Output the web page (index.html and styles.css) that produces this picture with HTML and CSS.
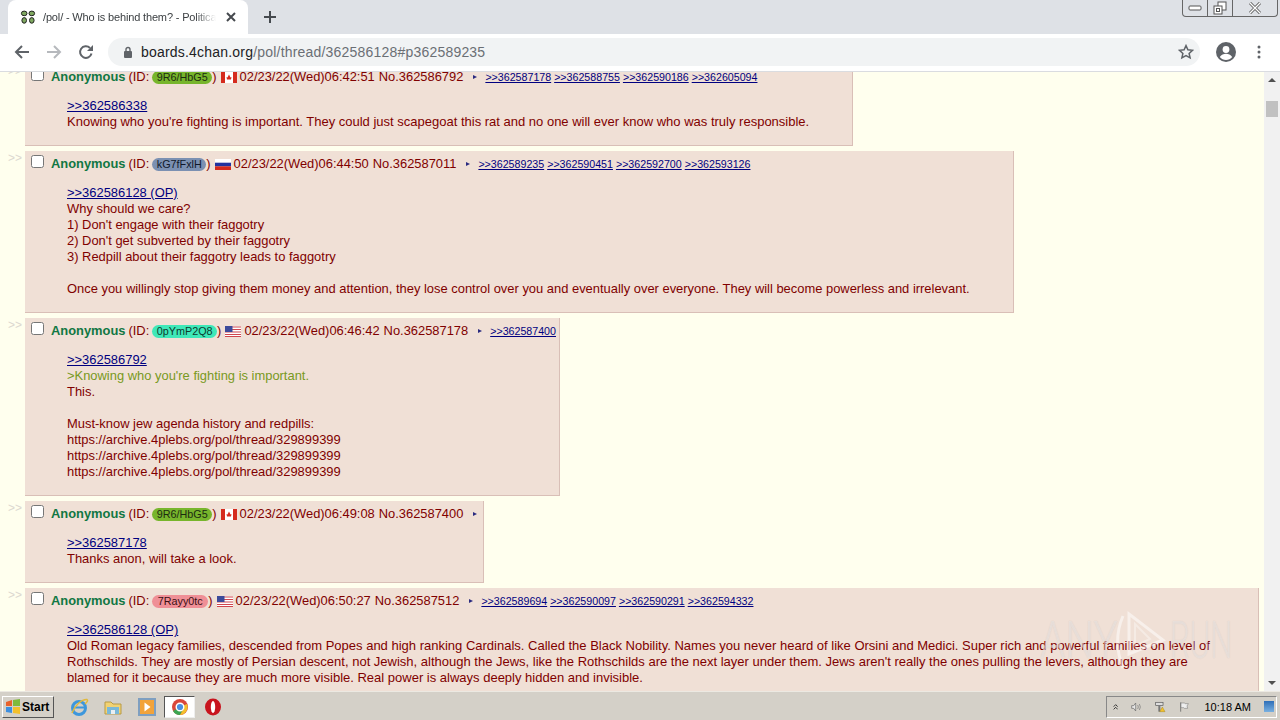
FILE: index.html
```html
<!DOCTYPE html>
<html lang="en">
<head>
<meta charset="utf-8">
<title>/pol/ - Who is behind them?</title>
<link rel="stylesheet" href="styles.css">
</head>
<body>
<div class="browser">
  <div class="tabstrip">
    <div class="tab">
      <svg class="favicon" width="16" height="16" viewBox="0 0 16 16"><g fill="#7fa860" stroke="#222" stroke-width="1"><ellipse cx="4.2" cy="4.4" rx="2.8" ry="2.3"/><ellipse cx="11.8" cy="4.4" rx="2.8" ry="2.3"/><ellipse cx="4.2" cy="11.4" rx="2.3" ry="2.8"/><ellipse cx="11.8" cy="11.4" rx="2.3" ry="2.8"/></g></svg>
      <span class="tab-title">/pol/ - Who is behind them? - Political</span>
      <svg class="tab-close" width="10" height="10" viewBox="0 0 10 10"><path d="M1 1l8 8M9 1l-8 8" stroke="#45494e" stroke-width="2"/></svg>
    </div>
    <svg class="newtab" width="14" height="14" viewBox="0 0 14 14"><path d="M7 1v12M1 7h12" stroke="#45494e" stroke-width="2"/></svg>
    <div class="winbtns">
      <div class="winbtn"><svg width="14" height="8" viewBox="0 0 14 8"><rect x="1" y="2" width="12" height="4" rx="1" fill="#fff" stroke="#555"/></svg></div>
      <div class="winbtn"><svg width="14" height="14" viewBox="0 0 14 14"><rect x="5" y="1" width="8" height="8" fill="#fff" stroke="#555"/><rect x="1" y="5" width="8" height="8" fill="#fff" stroke="#555"/><rect x="3.5" y="7.5" width="3" height="3" fill="none" stroke="#555"/></svg></div>
      <div class="winbtn wide"><svg width="12" height="12" viewBox="0 0 12 12"><path d="M1 1l10 10M11 1L1 11" stroke="#555" stroke-width="3"/><path d="M1 1l10 10M11 1L1 11" stroke="#fff" stroke-width="1.4"/></svg></div>
    </div>
  </div>
  <div class="toolbar">
    <svg class="navicon" width="16" height="16" viewBox="0 0 16 16"><path d="M15 8H2M8 2L2 8l6 6" fill="none" stroke="#5f6368" stroke-width="2"/></svg>
    <svg class="navicon" width="16" height="16" viewBox="0 0 16 16"><path d="M1 8h13M8 2l6 6-6 6" fill="none" stroke="#b6b9bd" stroke-width="2"/></svg>
    <svg class="navicon" width="16" height="16" viewBox="0 0 16 16"><path d="M13.5 9.5A5.8 5.8 0 1 1 12 4" fill="none" stroke="#5f6368" stroke-width="2"/><path d="M15 1v6H9z" fill="#5f6368"/></svg>
    <div class="omnibox">
      <svg width="10" height="12" viewBox="0 0 10 12"><rect x="1" y="5" width="8" height="7" rx="1" fill="#5f6368"/><path d="M3 5V3.5a2 2 0 0 1 4 0V5" fill="none" stroke="#5f6368" stroke-width="1.4"/></svg>
      <span class="url"><span class="host">boards.4chan.org</span>/pol/thread/362586128#p362589235</span>
      <svg class="star" width="16" height="16" viewBox="0 0 16 16"><path d="M8 1.6l1.9 4.2 4.6.5-3.4 3.1 1 4.5-4.1-2.3-4.1 2.3 1-4.5L1.5 6.3l4.6-.5z" fill="none" stroke="#5f6368" stroke-width="1.5"/></svg>
    </div>
    <svg class="avatar" width="20" height="20" viewBox="0 0 20 20"><circle cx="10" cy="10" r="10" fill="#5f6368"/><circle cx="10" cy="7.5" r="3.4" fill="#fff"/><path d="M3.8 15c1.6-2.4 3.8-3.2 6.2-3.2s4.600.8 6.200 3.200c-1.500 1.800-3.700 3-6.200 3s-4.700-1.200-6.200-3z" fill="#fff"/></svg>
    <svg class="menu" width="4" height="14" viewBox="0 0 4 14"><g fill="#5f6368"><circle cx="2" cy="2" r="1.500"/><circle cx="2" cy="7" r="1.500"/><circle cx="2" cy="12" r="1.500"/></g></svg>
  </div>
  <div class="viewport">
    <main class="thread">
      <div class="row">
        <div class="side">&gt;&gt;</div>
        <article class="post">
          <div class="head">
            <input type="checkbox" class="check">
            <span class="name">Anonymous</span>
            <span class="idlabel">(ID:</span><span class="pill pill-green">9R6/HbG5</span><span class="idclose">)</span>
            <svg class="flag" width="16" height="11" viewBox="0 0 16 11"><rect width="16" height="11" fill="#fff"/><rect width="4" height="11" fill="#d52b1e"/><rect x="12" width="4" height="11" fill="#d52b1e"/><path d="M8 2.500l1.500 3 1-.5-.5 2.500H6l-.5-2.500 1 .5z" fill="#d52b1e"/></svg>
            <span>02/23/22(Wed)06:42:51</span><span>No.362586792</span>
            <span class="tri"></span>
            <span class="backlinks"><a href="#">&gt;&gt;362587178</a> <a href="#">&gt;&gt;362588755</a> <a href="#">&gt;&gt;362590186</a> <a href="#">&gt;&gt;362605094</a></span>
          </div>
          <blockquote class="body body-wide"><a href="#">&gt;&gt;362586338</a><br>Knowing who you're fighting is important. They could just scapegoat this rat and no one will ever know who was truly responsible.</blockquote>
        </article>
      </div>
      <div class="row">
        <div class="side">&gt;&gt;</div>
        <article class="post">
          <div class="head">
            <input type="checkbox" class="check">
            <span class="name">Anonymous</span>
            <span class="idlabel">(ID:</span><span class="pill pill-blue">kG7fFxlH</span><span class="idclose">)</span>
            <svg class="flag" width="16" height="11" viewBox="0 0 16 11"><rect width="16" height="11" fill="#fff"/><rect y="3.700" width="16" height="3.700" fill="#2233a0"/><rect y="7.300" width="16" height="3.700" fill="#d52b1e"/></svg>
            <span>02/23/22(Wed)06:44:50</span><span>No.362587011</span>
            <span class="tri"></span>
            <span class="backlinks"><a href="#">&gt;&gt;362589235</a> <a href="#">&gt;&gt;362590451</a> <a href="#">&gt;&gt;362592700</a> <a href="#">&gt;&gt;362593126</a></span>
          </div>
          <blockquote class="body"><a href="#">&gt;&gt;362586128 (OP)</a><br>Why should we care?<br>1) Don't engage with their faggotry<br>2) Don't get subverted by their faggotry<br>3) Redpill about their faggotry leads to faggotry<br><br>Once you willingly stop giving them money and attention, they lose control over you and eventually over everyone. They will become powerless and irrelevant.</blockquote>
        </article>
      </div>
      <div class="row">
        <div class="side">&gt;&gt;</div>
        <article class="post">
          <div class="head">
            <input type="checkbox" class="check">
            <span class="name">Anonymous</span>
            <span class="idlabel">(ID:</span><span class="pill pill-teal">0pYmP2Q8</span><span class="idclose">)</span>
            <svg class="flag" width="16" height="11" viewBox="0 0 16 11"><rect width="16" height="11" fill="#fff"/><path d="M0 1h16M0 3.500h16M0 6h16M0 8.500h16M0 10.500h16" stroke="#d0464e" stroke-width="1.200"/><rect width="7.500" height="6" fill="#3c4a9a"/></svg>
            <span>02/23/22(Wed)06:46:42</span><span>No.362587178</span>
            <span class="tri"></span>
            <span class="backlinks"><a href="#">&gt;&gt;362587400</a></span>
          </div>
          <blockquote class="body"><a href="#">&gt;&gt;362586792</a><br><span class="greentext">&gt;Knowing who you're fighting is important.</span><br>This.<br><br>Must-know jew agenda history and redpills:<br>https://archive.4plebs.org/pol/thread/329899399<br>https://archive.4plebs.org/pol/thread/329899399<br>https://archive.4plebs.org/pol/thread/329899399</blockquote>
        </article>
      </div>
      <div class="row">
        <div class="side">&gt;&gt;</div>
        <article class="post">
          <div class="head">
            <input type="checkbox" class="check">
            <span class="name">Anonymous</span>
            <span class="idlabel">(ID:</span><span class="pill pill-green">9R6/HbG5</span><span class="idclose">)</span>
            <svg class="flag" width="16" height="11" viewBox="0 0 16 11"><rect width="16" height="11" fill="#fff"/><rect width="4" height="11" fill="#d52b1e"/><rect x="12" width="4" height="11" fill="#d52b1e"/><path d="M8 2.500l1.500 3 1-.5-.5 2.500H6l-.5-2.500 1 .5z" fill="#d52b1e"/></svg>
            <span>02/23/22(Wed)06:49:08</span><span>No.362587400</span>
            <span class="tri"></span>
          </div>
          <blockquote class="body"><a href="#">&gt;&gt;362587178</a><br>Thanks anon, will take a look.</blockquote>
        </article>
      </div>
      <div class="row">
        <div class="side">&gt;&gt;</div>
        <article class="post">
          <div class="head">
            <input type="checkbox" class="check">
            <span class="name">Anonymous</span>
            <span class="idlabel">(ID:</span><span class="pill pill-pink">7Rayy0tc</span><span class="idclose">)</span>
            <svg class="flag" width="16" height="11" viewBox="0 0 16 11"><rect width="16" height="11" fill="#fff"/><path d="M0 1h16M0 3.500h16M0 6h16M0 8.500h16M0 10.500h16" stroke="#d0464e" stroke-width="1.200"/><rect width="7.500" height="6" fill="#3c4a9a"/></svg>
            <span>02/23/22(Wed)06:50:27</span><span>No.362587512</span>
            <span class="tri"></span>
            <span class="backlinks"><a href="#">&gt;&gt;362589694</a> <a href="#">&gt;&gt;362590097</a> <a href="#">&gt;&gt;362590291</a> <a href="#">&gt;&gt;362594332</a></span>
          </div>
          <blockquote class="body body-wide"><a href="#">&gt;&gt;362586128 (OP)</a><br>Old Roman legacy families, descended from Popes and high ranking Cardinals. Called the Black Nobility. Names you never heard of like Orsini and Medici. Super rich and powerful families on level of Rothschilds. They are mostly of Persian descent, not Jewish, although the Jews, like the Rothschilds are the next layer under them. Jews aren't really the ones pulling the levers, although they are blamed for it because they are much more visible. Real power is always deeply hidden and invisible.</blockquote>
        </article>
      </div>
    </main>
    <div class="scrollbar">
      <svg width="16" height="16" viewBox="0 0 16 16"><path d="M4 10l4-4 4 4z" fill="#505050"/></svg>
      <div class="track"><div class="thumb"></div></div>
      <svg width="16" height="16" viewBox="0 0 16 16"><path d="M4 6l4 4 4-4z" fill="#505050"/></svg>
    </div>
    <div class="watermark" aria-hidden="true">
      <span class="wm-text wm-any">ANY</span>
      <svg class="wm-logo" width="54" height="62" viewBox="0 0 54 62"><path d="M8 58C1 40 1 22 8 6M14 4l34 26-34 14z" fill="none" stroke="#fff" stroke-opacity=".5" stroke-width="3"/><path d="M20 14l15 15-15 7z" fill="none" stroke="#fff" stroke-opacity=".35" stroke-width="2"/></svg>
      <span class="wm-text wm-run">RUN</span>
    </div>
  </div>
  <footer class="taskbar">
    <button class="start" type="button">
      <svg width="16" height="16" viewBox="0 0 16 16"><path d="M1 3l6-2v6H1z" fill="#e8622c"/><path d="M8 1l7-1v7H8z" fill="#7fba3c"/><path d="M1 8h6v6l-6-1z" fill="#3d8fe0"/><path d="M8 8h7v7l-7-1z" fill="#f3c02c"/></svg>
      Start
    </button>
    <div class="apps">
      <svg class="app" width="20" height="20" viewBox="0 0 20 20"><circle cx="10" cy="11" r="6.500" fill="none" stroke="#3d97dc" stroke-width="3"/><path d="M4 10.500h12.500" stroke="#3d97dc" stroke-width="2"/><path d="M3 16C6 8 13 2 18 2.500c1.500 1-.5 3-2 4.500" fill="none" stroke="#e2b93b" stroke-width="1.500"/></svg>
      <svg class="app" width="20" height="20" viewBox="0 0 20 20"><path d="M2 5h6l2 2h8v10H2z" fill="#f2d272" stroke="#b79a46"/><rect x="4" y="10" width="12" height="7" fill="#7ab8d8"/><rect x="8" y="13" width="4" height="4" fill="#e8eef2"/></svg>
      <svg class="app" width="20" height="20" viewBox="0 0 20 20"><rect x="2" y="2" width="16" height="16" fill="#f2a33a" stroke="#7f9fc0" stroke-width="2"/><path d="M7.500 5.500l6 4.500-6 4.500z" fill="#fff"/></svg>
      <div class="app-active"><svg width="16" height="16" viewBox="0 0 16 16"><circle cx="8" cy="8" r="8" fill="#d9473a"/><path d="M8 8L1 12a8 8 0 0 0 7 4l4-7z" fill="#3ca652"/><path d="M8 8l7-3a8 8 0 0 1-7 11l4-7z" fill="#f3c02c"/><circle cx="8" cy="8" r="3.800" fill="#4a8fe0" stroke="#fff" stroke-width="1.400"/></svg></div>
      <svg class="app" width="18" height="20" viewBox="0 0 18 20"><ellipse cx="9" cy="10" rx="8" ry="8.500" fill="#c8141e"/><ellipse cx="9" cy="10" rx="2.200" ry="6" fill="#fff"/></svg>
    </div>
    <div class="tray">
      <svg width="8" height="10" viewBox="0 0 8 10"><path d="M1 4.500l3-3 3 3M1 8.500l3-3 3 3" fill="none" stroke="#222" stroke-width="1.300"/></svg>
      <svg width="16" height="16" viewBox="0 0 16 16"><path d="M1 6h3l3-4v12l-3-4H1z" fill="#e8e8e8" stroke="#666"/><path d="M10 5q2 3 0 6M12.500 3.500q3 4.500 0 9" fill="none" stroke="#777"/></svg>
      <svg width="16" height="16" viewBox="0 0 16 16"><rect x="1" y="1" width="11" height="5" fill="#ddd" stroke="#555"/><rect x="5" y="6" width="3" height="9" fill="#777"/><path d="M11 8l4 7H7z" fill="#f3c02c" stroke="#8a6d00" stroke-width=".500"/></svg>
      <svg width="16" height="16" viewBox="0 0 16 16"><path d="M2.500 1v14" stroke="#666" stroke-width="1.200"/><path d="M3 2h5l1 1h5l-2 3.500 1 3.500H8l-1-1H3z" fill="#eee" stroke="#777" stroke-width=".800"/></svg>
      <span class="clock">10:18 AM</span>
      <div class="desktop"></div>
    </div>
  </footer>
</div>
</body>
</html>
```
FILE: styles.css
```css
* { box-sizing: content-box; }
html, body { margin: 0; height: 100%; overflow: hidden; }
body { font-family: "Liberation Sans", Arial, sans-serif; background: #fff; }
.browser { width: 1280px; height: 720px; display: flex; flex-direction: column; }

.tabstrip { height: 34px; background: #dee1e6; display: flex; align-items: center; flex: none; }
.tab { width: 240px; height: 34px; margin-left: 8px; background: #fff; border-radius: 8px 8px 0 0; display: flex; align-items: center; box-sizing: border-box; padding: 0 12px; }
.favicon { flex: none; margin-right: 7px; }
.tab-title { flex: 1; overflow: hidden; white-space: nowrap; font-size: 11px; letter-spacing: -0.15px; color: #3c4043; -webkit-mask-image: linear-gradient(to right, #000 88%, transparent); mask-image: linear-gradient(to right, #000 88%, transparent); }
.tab-close { flex: none; margin-left: 10px; }
.newtab { margin-left: 15px; }
.winbtns { margin-left: auto; margin-right: 2px; align-self: flex-start; height: 16px; display: flex; background: #dee1e6; border: 1px solid #666; border-top: 0; border-radius: 0 0 4px 4px; }
.winbtn { width: 24px; display: flex; align-items: center; justify-content: center; border-right: 1px solid #666; overflow: hidden; }
.winbtn.wide { width: 44px; border-right: 0; }

.toolbar { height: 36px; padding-bottom: 1px; background: #fff; border-bottom: 1px solid #dadce0; display: flex; align-items: center; flex: none; }
.navicon { flex: none; margin-left: 16px; margin-right: 0; }
.navicon:first-child { margin-left: 14px; }
.omnibox { width: 1092px; height: 28px; margin-left: 14px; background: #f1f3f4; border-radius: 14px; display: flex; align-items: center; box-sizing: border-box; padding: 0 6px 0 15px; }
.url { font-size: 14px; color: #6b6f74; margin-left: 8px; letter-spacing: 0.2px; }
.host { color: #202124; }
.star { margin-left: auto; }
.avatar { margin-left: 16px; flex: none; }
.menu { margin-left: 21px; flex: none; }

.viewport { flex: 1; min-height: 0; position: relative; display: flex; overflow: hidden; background: #ffffee; }
.thread { flex: 1; min-width: 0; margin-top: -8px; padding-right: 5px; color: #800000; font-size: 12.93px; line-height: 16px; }
.row { display: flex; align-items: flex-start; margin-bottom: 5px; }
.side { width: 25px; flex: none; box-sizing: border-box; padding: 0 0 0 8px; color: #dcd8d0; font-size: 12px; line-height: 14px; }
.post { min-width: 0; padding: 2px; background: #f0e0d6; border-right: 1px solid #d9bfb7; border-bottom: 1px solid #d9bfb7; }
.head { height: 14px; padding: 4px 1px 0 4px; display: flex; align-items: center; white-space: pre; font-size: 12.9px; }
.head > span { margin-right: 4px; }
.check { width: 13px; height: 13px; margin: -6px 7px 0 0; flex: none; }
.head > .name { color: #117743; font-weight: bold; margin-right: 3px; }
.head > .idlabel { margin-right: 3px; }
.head > .idclose { margin-right: 4px; }
.head > .pill { font-size: 10.8px; line-height: 13px; padding: 0 4.500px; border-radius: 7px; margin-right: 0; }
.head > .pill-green { background: #77b52c; color: #1c2b10; }
.head > .pill-blue { background: #7b90b2; color: #10182a; }
.head > .pill-teal { background: #3fe8b8; color: #0d3a2e; }
.head > .pill-pink { background: #ef8f96; color: #3a1014; padding: 0 5.500px; }
.flag { flex: none; margin-right: 3px; }
.head > .tri { width: 0; height: 0; border-left: 4px solid #2b2b80; border-top: 2.500px solid transparent; border-bottom: 2.500px solid transparent; margin: 0 3px 0 6px; }
.head > .backlinks { font-size: 10.67px; margin: 0 0 0 5px; }
a { color: #000080; }
.body { margin: 14px 41px 13px 40px; }
.body-wide { font-size: 13px; }
.greentext { color: #789922; }

.scrollbar { width: 16px; flex: none; background: #f1f1f1; display: flex; flex-direction: column; }
.track { flex: 1; padding: 13px 2px 0; }
.thumb { height: 16px; background: #c1c1c1; }
.watermark { position: absolute; left: 1040px; top: 538px; display: flex; align-items: center; font-family: Roboto, sans-serif; font-weight: 300; font-size: 52px; line-height: 62px; color: rgba(255,255,255,.45); text-shadow: 0 0 1px rgba(120,100,90,.25); pointer-events: none; }
.wm-text { display: block; transform-origin: left center; white-space: nowrap; }
.wm-any { width: 65px; transform: scaleX(.78); }
.wm-run { width: 62px; transform: scaleX(.6); }
.wm-logo { flex: none; margin: 0 1px 0 10px; }

.taskbar { height: 27px; padding-top: 1px; flex: none; background: #d4d0c8; border-top: 1px solid #ece9e2; display: flex; align-items: center; }
.start { width: 52px; height: 22px; margin: 0 0 0 2px; padding: 0 0 0 2px; display: flex; align-items: center; gap: 1px; background: #d4d0c8; border: 1px solid; border-color: #fff #555 #555 #fff; font: bold 12px "Liberation Sans", sans-serif; color: #000; box-sizing: border-box; }
.apps { display: flex; align-items: center; margin-left: 15px; }
.app { flex: none; margin-right: 14px; }
.app-active { width: 31px; height: 22px; margin-left: -7px; display: flex; align-items: center; justify-content: center; background: #fff; border: 1px solid; border-color: #555 #eee #eee #555; box-sizing: border-box; margin-right: 9px; }
.tray { margin-left: auto; margin-right: 3px; width: 171px; height: 22px; box-sizing: border-box; display: flex; align-items: center; gap: 13px; padding-left: 6px; border: 1px solid; border-color: #888 #fff #fff #888; }
.clock { font-size: 11px; color: #000; margin-left: 2px; white-space: nowrap; }
.desktop { width: 15px; height: 11px; margin-left: auto; margin-right: 2px; background: linear-gradient(#2f6fb8, #7ab0e0); }
```
